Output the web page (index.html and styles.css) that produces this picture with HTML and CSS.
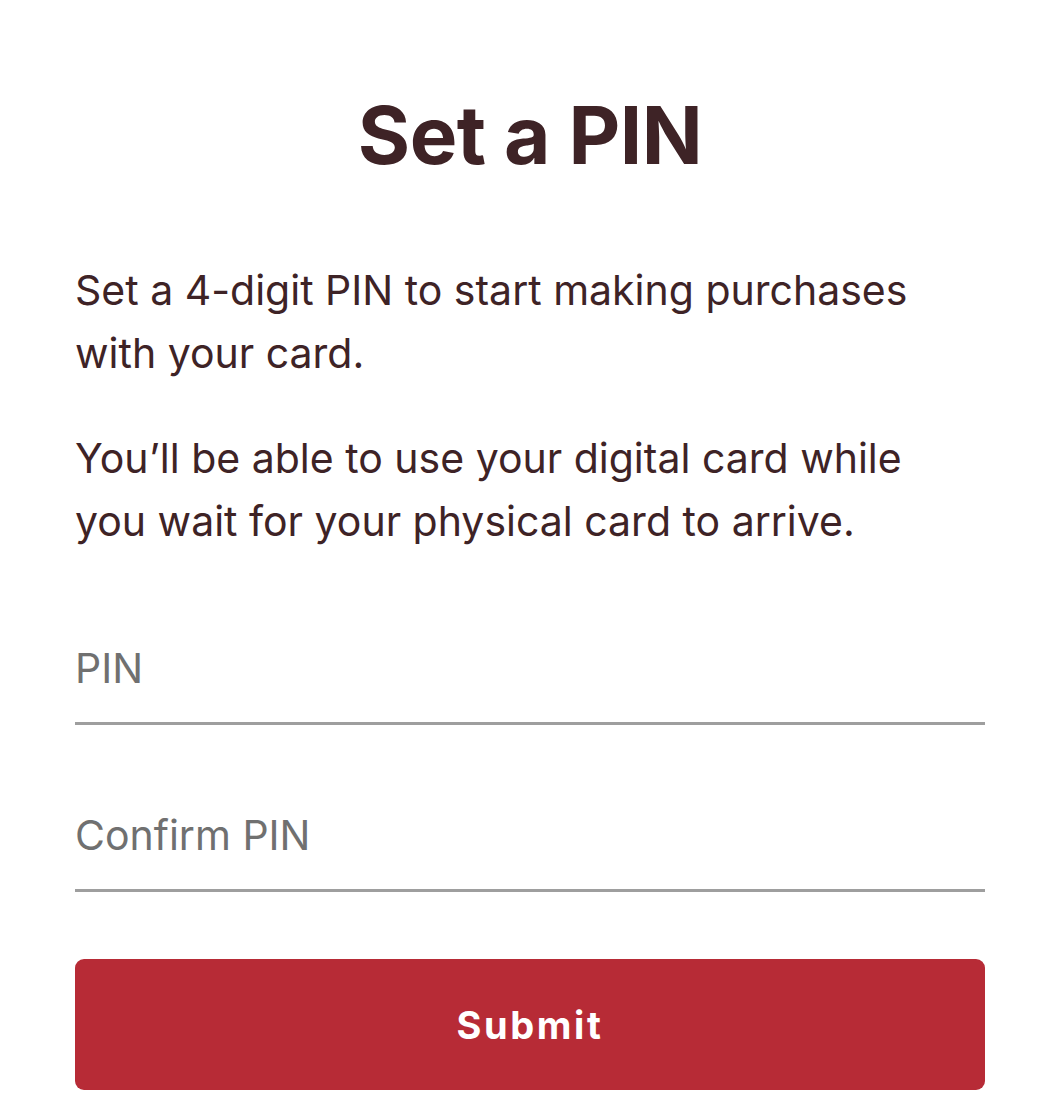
FILE: index.html
```html
<!DOCTYPE html>
<html lang="en">
<head>
<meta charset="utf-8">
<title>Set a PIN</title>
<link rel="stylesheet" href="styles.css">
</head>
<body>
<main class="page">
  <h1 class="title">Set a PIN</h1>
  <p class="text">Set a 4-digit PIN to start making purchases with your card.</p>
  <p class="text text-second">You’ll be able to use your digital card while you wait for your physical card to arrive.</p>
  <form class="form">
    <input class="field" type="password" inputmode="numeric" placeholder="PIN">
    <input class="field field-confirm" type="password" inputmode="numeric" placeholder="Confirm PIN">
    <button class="submit" type="button">Submit</button>
  </form>
</main>
</body>
</html>
```
FILE: styles.css
```css
html, body {
  margin: 0;
  padding: 0;
  background: #ffffff;
}

.page {
  padding: 85px 59px 0 75px;
  font-family: "Inter", "Lato", "Liberation Sans", sans-serif;
  color: #3e2326;
}

.title {
  margin: 0;
  text-align: center;
  font-size: 80px;
  line-height: 100px;
  font-weight: 700;
  letter-spacing: -0.5px;
}

.text {
  margin: 74px 0 0;
  max-width: 870px;
  font-size: 41px;
  line-height: 63px;
  font-weight: 400;
}

.text-second {
  margin-top: 42px;
}

.form {
  display: flex;
  flex-direction: column;
  margin-top: 84px;
}

.field {
  display: block;
  box-sizing: content-box;
  width: 100%;
  height: 63px;
  line-height: 63px;
  padding: 0 0 22px;
  margin: 0;
  border: 0;
  border-bottom: 3px solid #9e9e9e;
  outline: none;
  background: transparent;
  font-family: "Inter", "Lato", "Liberation Sans", sans-serif;
  font-size: 41px;
  color: #3e2326;
}

.field::placeholder {
  color: #707070;
  opacity: 1;
}

.field-confirm {
  margin-top: 79px;
}

.submit {
  margin-top: 67px;
  height: 131px;
  border: 0;
  border-radius: 9px;
  background: #b72b36;
  color: #ffffff;
  font-family: "Inter", "Lato", "Liberation Sans", sans-serif;
  font-size: 38px;
  font-weight: 700;
  letter-spacing: 2.6px;
  cursor: pointer;
}
```
